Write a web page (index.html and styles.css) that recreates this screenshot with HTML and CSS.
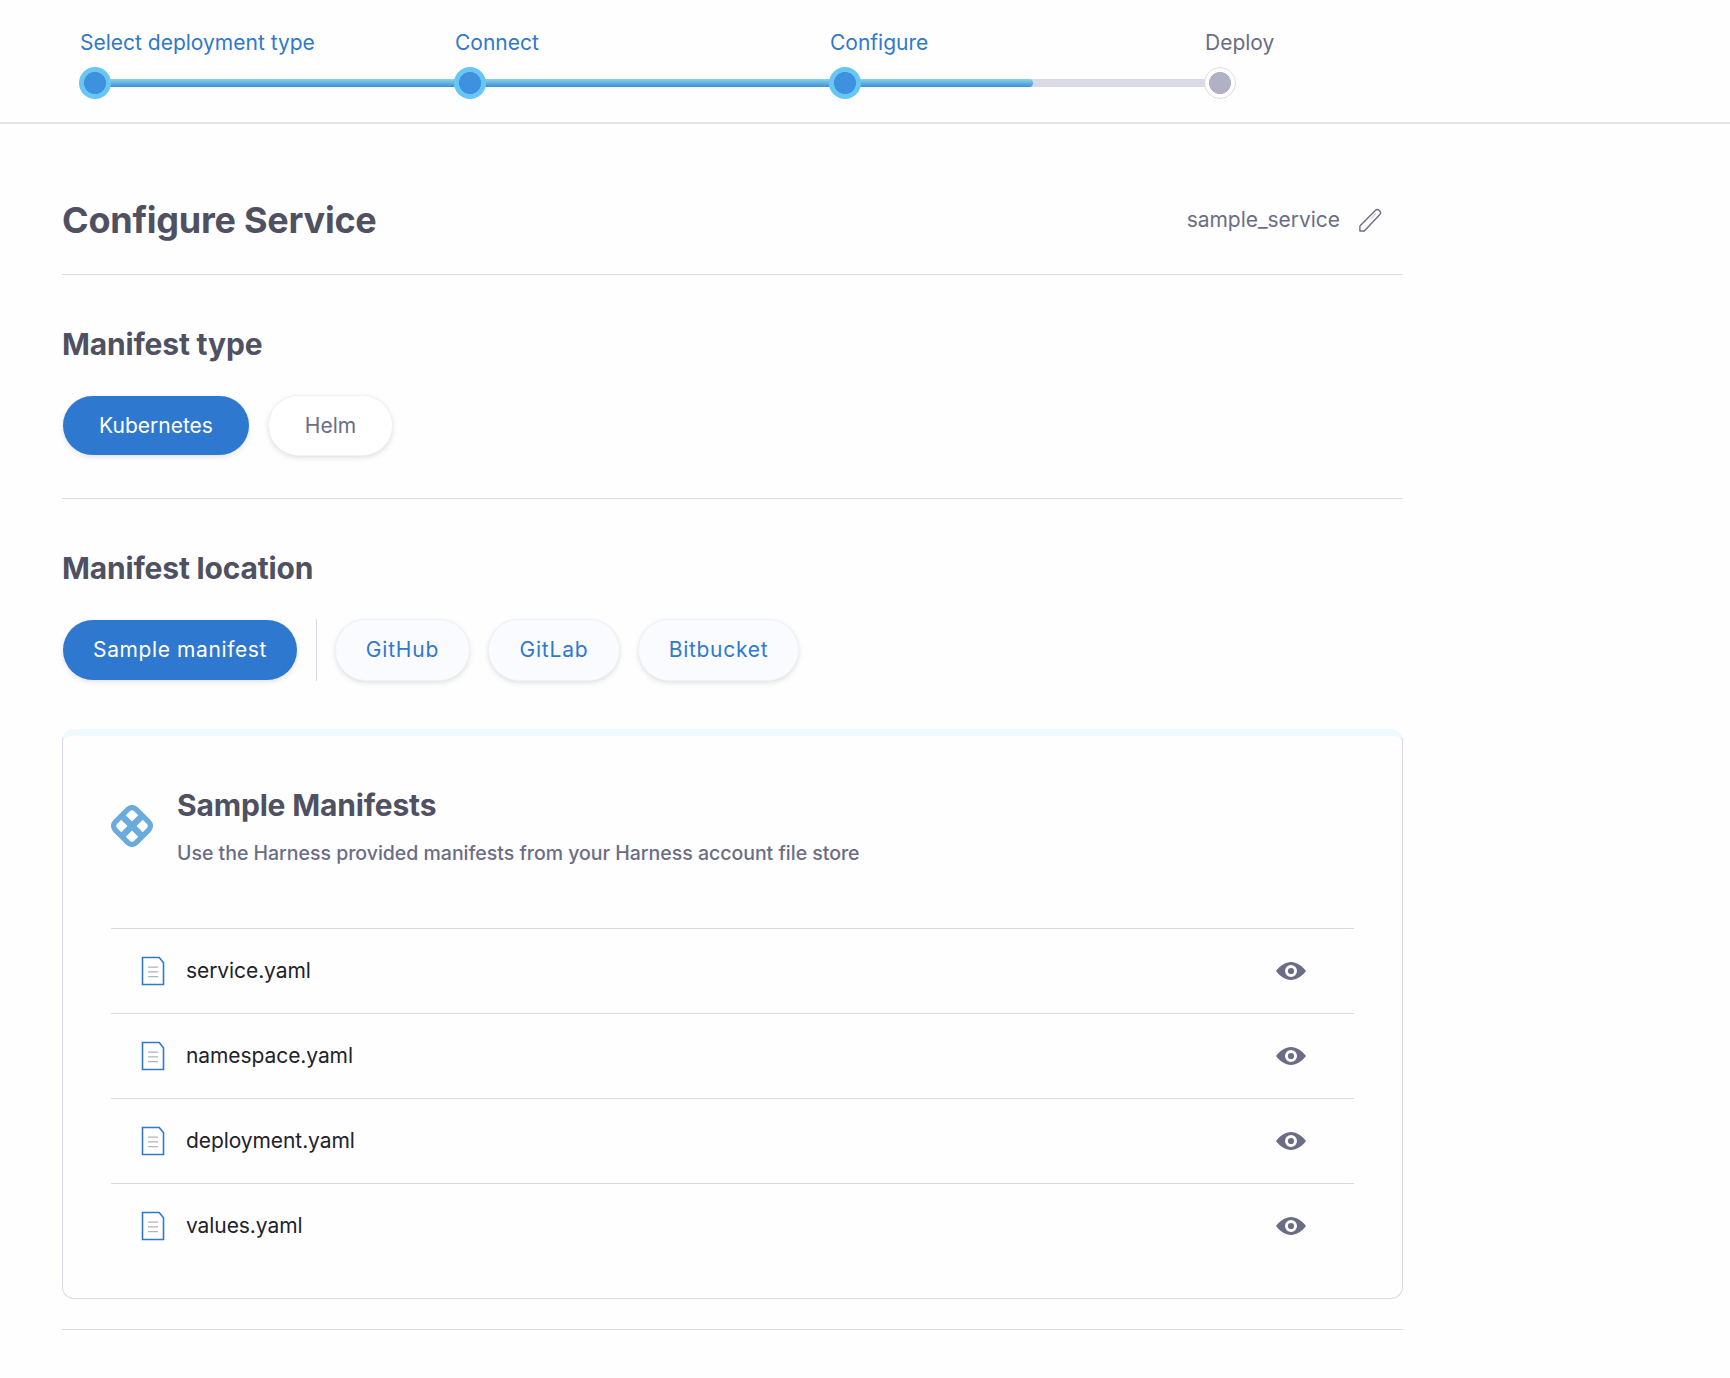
FILE: index.html
```html
<!DOCTYPE html>
<html lang="en">
<head>
<meta charset="utf-8">
<title>Configure Service</title>
<link rel="stylesheet" href="styles.css">
</head>
<body>
<svg class="sprite" aria-hidden="true">
  <symbol id="file" viewBox="0 0 24 30">
    <path d="M1.500 1.500h16.700l4.300 5.300v21.700H1.500Z" fill="#fff" stroke="#2f78cf" stroke-width="1.600"/>
    <path d="M7 11.200h10M7 15.800h10M7 20.600h10" stroke="#b4b4b8" stroke-width="1.200"/>
  </symbol>
  <symbol id="eye" viewBox="0 0 30 18">
    <path fill-rule="evenodd" d="M0 9C4.200 3.500 9.500 0 15 0s10.800 3.500 15 9c-4.200 5.500-9.500 9-15 9S4.200 14.500 0 9Zm15-6a6 6 0 1 0 0 12 6 6 0 0 0 0-12Z" fill="#6b6d85"/>
    <circle cx="15" cy="9" r="3.100" fill="#6b6d85"/>
  </symbol>
</svg>

<header class="stepper">
  <div class="step done">
    <span class="step-label">Select deployment type</span>
    <div class="track"><i class="node"></i><i class="line"><b class="fill"></b></i></div>
  </div>
  <div class="step done">
    <span class="step-label">Connect</span>
    <div class="track"><i class="node"></i><i class="line"><b class="fill"></b></i></div>
  </div>
  <div class="step done current">
    <span class="step-label">Configure</span>
    <div class="track"><i class="node"></i><i class="line"><b class="fill"></b></i></div>
  </div>
  <div class="step">
    <span class="step-label">Deploy</span>
    <div class="track"><i class="node"></i></div>
  </div>
</header>

<main class="content">
  <section class="title-row">
    <h1>Configure Service</h1>
    <div class="service-name">
      <span>sample_service</span>
      <svg width="24" height="24" viewBox="0 0 24 24" fill="none">
        <path d="M1.900 23V18L17.300 2.500a2.900 2.900 0 0 1 4.100 0l.2.200a2.900 2.900 0 0 1 0 4.100L6.300 23Z" stroke="#6b6d85" stroke-width="1.400" stroke-linejoin="round"/>
        <path d="M13 10.500l5-4.900" stroke="#d3dbd8" stroke-width="1.600"/>
      </svg>
    </div>
  </section>

  <section class="type-section">
    <h2>Manifest type</h2>
    <div class="pills">
      <button class="pill selected kubernetes">Kubernetes</button>
      <button class="pill helm">Helm</button>
    </div>
  </section>

  <section class="location-section">
    <h2>Manifest location</h2>
    <div class="pills">
      <button class="pill selected sample">Sample manifest</button>
      <span class="separator"></span>
      <button class="pill store github">GitHub</button>
      <button class="pill store gitlab">GitLab</button>
      <button class="pill store bitbucket">Bitbucket</button>
    </div>

    <div class="card">
      <div class="card-head">
        <svg width="42" height="42" viewBox="-21 -21 42 42">
          <g transform="rotate(45)">
            <rect x="-17.350" y="-17.350" width="34.700" height="34.700" rx="8.500" fill="#68abdc"/>
            <g fill="#fff">
              <path id="cell" d="M3.200 3.200h8.800v5.300a3.500 3.500 0 0 1-3.500 3.500H3.200Z"/>
              <use href="#cell" transform="rotate(90)"/>
              <use href="#cell" transform="rotate(180)"/>
              <use href="#cell" transform="rotate(270)"/>
            </g>
          </g>
        </svg>
        <div>
          <h3>Sample Manifests</h3>
          <p>Use the Harness provided manifests from your Harness account file store</p>
        </div>
      </div>
      <ul class="files">
        <li><svg class="file-icon"><use href="#file"/></svg><span>service.yaml</span><svg class="eye-icon"><use href="#eye"/></svg></li>
        <li><svg class="file-icon"><use href="#file"/></svg><span>namespace.yaml</span><svg class="eye-icon"><use href="#eye"/></svg></li>
        <li><svg class="file-icon"><use href="#file"/></svg><span>deployment.yaml</span><svg class="eye-icon"><use href="#eye"/></svg></li>
        <li><svg class="file-icon"><use href="#file"/></svg><span>values.yaml</span><svg class="eye-icon"><use href="#eye"/></svg></li>
      </ul>
    </div>
  </section>
</main>
</body>
</html>
```

FILE: styles.css
```css
* { box-sizing: border-box; }

body {
  margin: 0;
  height: 1378px;
  overflow: hidden;
  background: #fefefe;
  color: #4f5162;
  font: 400 21px/32px Inter, "Liberation Sans", sans-serif;
}

h1, h2, h3, p, ul { margin: 0; padding: 0; }
.sprite { display: none; }

/* Progress stepper */
.stepper {
  display: grid;
  grid-template-columns: 375px 375px 375px auto;
  height: 124px;
  padding: 27px 0 0 79px;
  border-bottom: 2px solid #e4e4e5;
}
.step { color: #6b6d85; }
.step.done { color: #2f78cf; }
.step-label { display: block; height: 40px; white-space: nowrap; padding-left: 1px; }
.track { display: flex; align-items: center; height: 32px; }
.node {
  position: relative;
  z-index: 1;
  flex: none;
  width: 32px;
  height: 32px;
  border: 1px solid #dcdce6;
  border-radius: 50%;
  background: radial-gradient(circle, #b0b1c4 10.700px, #fff 11.300px);
}
.done .node {
  border: 0;
  background: radial-gradient(circle, #3d91de 10.700px, #67c6f2 11.300px);
}
.line { flex: 1; height: 8px; margin: 0 -1px; background: #d9dae5; }
.fill { display: block; height: 8px; background: linear-gradient(#86d6e4, #3d8edd); }
.current .fill { width: 50%; border-radius: 0 4px 4px 0; }

/* Page body */
.content { width: 1341px; margin-left: 62px; }
.title-row {
  display: flex;
  justify-content: space-between;
  height: 151px;
  padding: 72px 21px 0 0;
  border-bottom: 1px solid #d9dae5;
}
h1 { font-size: 36px; font-weight: 700; line-height: 48px; letter-spacing: -.24px; }
h2, h3 { font-size: 30px; font-weight: 700; line-height: 40px; letter-spacing: -.18px; }
.service-name { display: flex; align-items: center; gap: 18px; height: 48px; color: #6b6d85; letter-spacing: -.03px; }

.type-section { height: 224px; padding-top: 49px; border-bottom: 1px solid #d9dae5; }
.location-section { height: 831px; padding-top: 49px; border-bottom: 1px solid #d9dae5; }

.pills { display: flex; align-items: center; height: 62px; margin-top: 31px; padding-left: 1px; }
.type-section .pills { height: 61px; }
.pill {
  height: 61px;
  padding: 0;
  border: 1px solid #f2f3f8;
  border-radius: 31px;
  background: #fff;
  color: #6b6d85;
  font: inherit;
  box-shadow: 0 2px 5px rgba(96, 97, 112, .17), 0 0 1px rgba(40, 41, 61, .06);
}
.pill.selected { height: 59px; border: 0; background: #2f78cf; color: #fff; }
.kubernetes { width: 186px; }
.helm { width: 125px; margin-left: 19px; }
.pill.sample { width: 234px; height: 60px; letter-spacing: .6px; }
.separator { width: 1px; height: 62px; margin: 0 18px 0 19px; background: #d9dae5; }
.store { height: 62px; background: #fafbfe; color: #2f78cf; letter-spacing: .8px; }
.github { width: 135px; }
.gitlab { width: 132px; margin-left: 18px; }
.bitbucket { width: 161px; margin-left: 18px; letter-spacing: .72px; }

/* Manifest card */
.card {
  height: 570px;
  margin-top: 48px;
  padding: 49px 48px 0;
  border: 1px solid #d9dae5;
  border-top: 7px solid #effafe;
  border-radius: 12px;
}
.card-head { display: flex; height: 143px; gap: 24px; }
.card-head > svg { margin-top: 20px; }
.card-head p {
  margin-top: 12px;
  color: #6b6d85;
  font-size: 19.500px;
  font-weight: 500;
  letter-spacing: -.015px;
  white-space: nowrap;
}
.files { list-style: none; }
.files li {
  display: flex;
  align-items: center;
  height: 85px;
  padding: 0 48px 0 30px;
  border-top: 1px solid #d9dae5;
  color: #22222a;
  letter-spacing: -.08px;
}
.file-icon { width: 24px; height: 30px; margin-right: 21px; }
.eye-icon { width: 30px; height: 18px; margin-left: auto; }
```
